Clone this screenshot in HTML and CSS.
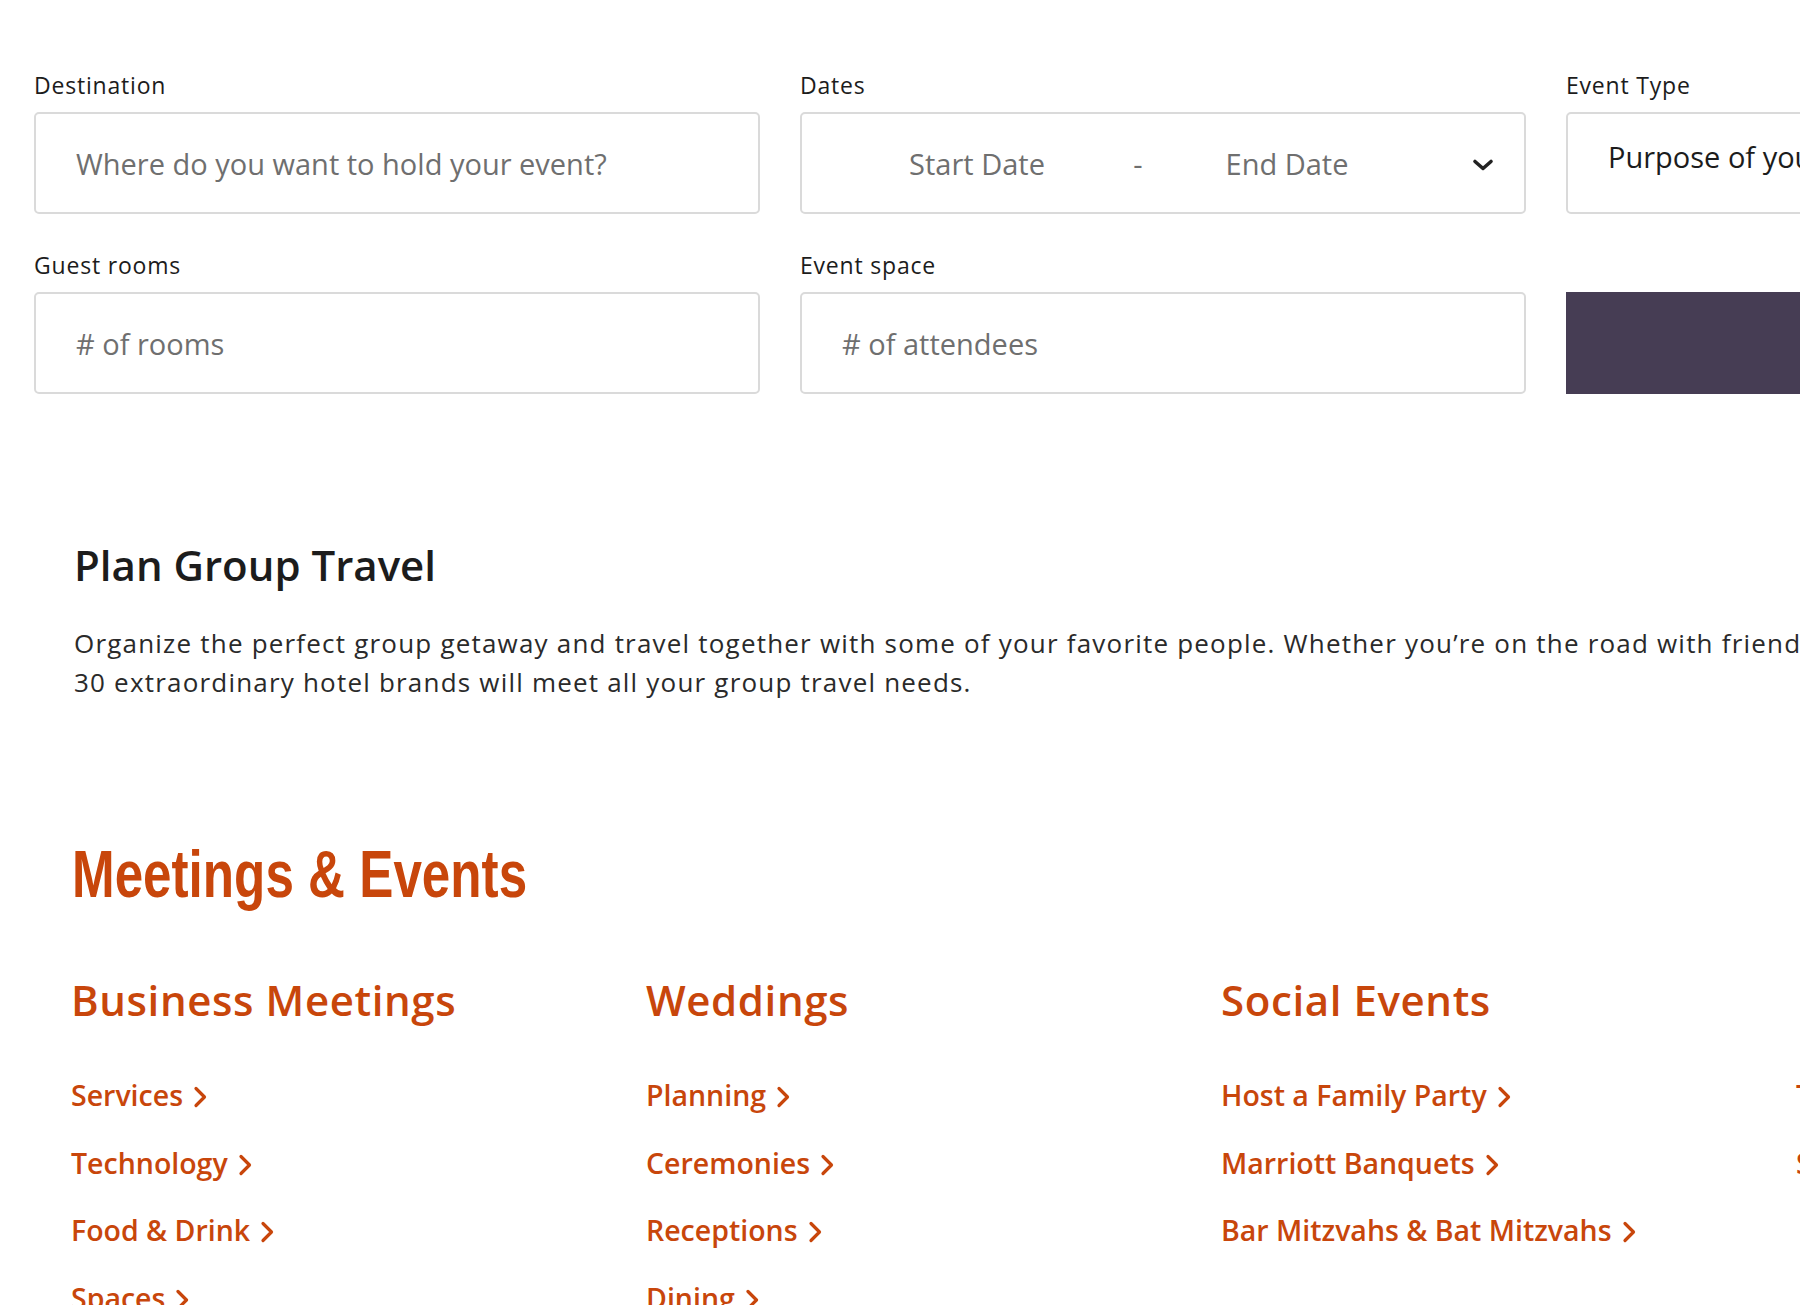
FILE: index.html
```html
<!DOCTYPE html>
<html lang="en">
<head>
<meta charset="utf-8">
<title>Meetings &amp; Events</title>
<link rel="stylesheet" href="styles.css">
</head>
<body>
<div class="page">
  <section class="search">
    <div class="field">
      <label class="lbl">Destination</label>
      <div class="box"><span class="ph">Where do you want to hold your event?</span></div>
    </div>
    <div class="field">
      <label class="lbl">Dates</label>
      <div class="box dates">
        <span class="ph c">Start Date</span>
        <span class="ph c">-</span>
        <span class="ph c">End Date</span>
        <span></span>
        <svg class="caret" width="22" height="14" viewBox="0 0 22 14"><path d="M3 3.5 L11 10.5 L19 3.5" fill="none" stroke="#222" stroke-width="3.6" stroke-linecap="round" stroke-linejoin="round"/></svg>
      </div>
    </div>
    <div class="field">
      <label class="lbl">Event Type</label>
      <div class="box type"><span class="val">Purpose of your event</span></div>
    </div>
    <div class="field">
      <label class="lbl">Guest rooms</label>
      <div class="box"><span class="ph"># of rooms</span></div>
    </div>
    <div class="field">
      <label class="lbl">Event space</label>
      <div class="box"><span class="ph"># of attendees</span></div>
    </div>
    <div class="field">
      <span class="lbl">&nbsp;</span>
      <button class="go" type="button">Find</button>
    </div>
  </section>

  <section class="group">
    <h2 class="group-title">Plan Group Travel</h2>
    <p class="group-text">Organize the perfect group getaway and travel together with some of your favorite people. Whether you’re on the road with friends, family or teammates, our<br>30 extraordinary hotel brands will meet all your group travel needs.</p>
  </section>

  <section class="events">
    <h1 class="events-title">Meetings &amp; Events</h1>
    <div class="cols">
      <div class="col">
        <h3 class="col-title">Business Meetings</h3>
        <a class="lnk" href="#">Services<svg class="chev" width="15" height="22" viewBox="0 0 15 22"><path d="M3 2.5 L11.5 11 L3 19.5" fill="none" stroke="currentColor" stroke-width="3.2" stroke-linecap="round" stroke-linejoin="round"/></svg></a>
        <a class="lnk" href="#">Technology<svg class="chev" width="15" height="22" viewBox="0 0 15 22"><path d="M3 2.5 L11.5 11 L3 19.5" fill="none" stroke="currentColor" stroke-width="3.2" stroke-linecap="round" stroke-linejoin="round"/></svg></a>
        <a class="lnk" href="#">Food &amp; Drink<svg class="chev" width="15" height="22" viewBox="0 0 15 22"><path d="M3 2.5 L11.5 11 L3 19.5" fill="none" stroke="currentColor" stroke-width="3.2" stroke-linecap="round" stroke-linejoin="round"/></svg></a>
        <a class="lnk" href="#">Spaces<svg class="chev" width="15" height="22" viewBox="0 0 15 22"><path d="M3 2.5 L11.5 11 L3 19.5" fill="none" stroke="currentColor" stroke-width="3.2" stroke-linecap="round" stroke-linejoin="round"/></svg></a>
      </div>
      <div class="col">
        <h3 class="col-title">Weddings</h3>
        <a class="lnk" href="#">Planning<svg class="chev" width="15" height="22" viewBox="0 0 15 22"><path d="M3 2.5 L11.5 11 L3 19.5" fill="none" stroke="currentColor" stroke-width="3.2" stroke-linecap="round" stroke-linejoin="round"/></svg></a>
        <a class="lnk" href="#">Ceremonies<svg class="chev" width="15" height="22" viewBox="0 0 15 22"><path d="M3 2.5 L11.5 11 L3 19.5" fill="none" stroke="currentColor" stroke-width="3.2" stroke-linecap="round" stroke-linejoin="round"/></svg></a>
        <a class="lnk" href="#">Receptions<svg class="chev" width="15" height="22" viewBox="0 0 15 22"><path d="M3 2.5 L11.5 11 L3 19.5" fill="none" stroke="currentColor" stroke-width="3.2" stroke-linecap="round" stroke-linejoin="round"/></svg></a>
        <a class="lnk" href="#">Dining<svg class="chev" width="15" height="22" viewBox="0 0 15 22"><path d="M3 2.5 L11.5 11 L3 19.5" fill="none" stroke="currentColor" stroke-width="3.2" stroke-linecap="round" stroke-linejoin="round"/></svg></a>
      </div>
      <div class="col">
        <h3 class="col-title">Social Events</h3>
        <a class="lnk" href="#">Host a Family Party<svg class="chev" width="15" height="22" viewBox="0 0 15 22"><path d="M3 2.5 L11.5 11 L3 19.5" fill="none" stroke="currentColor" stroke-width="3.2" stroke-linecap="round" stroke-linejoin="round"/></svg></a>
        <a class="lnk" href="#">Marriott Banquets<svg class="chev" width="15" height="22" viewBox="0 0 15 22"><path d="M3 2.5 L11.5 11 L3 19.5" fill="none" stroke="currentColor" stroke-width="3.2" stroke-linecap="round" stroke-linejoin="round"/></svg></a>
        <a class="lnk" href="#">Bar Mitzvahs &amp; Bat Mitzvahs<svg class="chev" width="15" height="22" viewBox="0 0 15 22"><path d="M3 2.5 L11.5 11 L3 19.5" fill="none" stroke="currentColor" stroke-width="3.2" stroke-linecap="round" stroke-linejoin="round"/></svg></a>
      </div>
      <div class="col">
        <h3 class="col-title">&nbsp;</h3>
        <a class="lnk" href="#">Travel Agents</a>
        <a class="lnk" href="#">Small Groups</a>
      </div>
    </div>
  </section>
</div>
</body>
</html>
```

FILE: styles.css
```css
* { box-sizing: border-box; }
html, body { margin: 0; padding: 0; }
body {
  background: #fff;
  color: #1c1c1c;
  font-family: "Open Sans", "Noto Sans", "Liberation Sans", sans-serif;
  overflow: hidden;
  width: 1800px;
  height: 1305px;
}
.page { width: 2400px; }

/* search form */
.search {
  display: grid;
  grid-template-columns: 726px 726px 726px;
  column-gap: 40px;
  row-gap: 39px;
  padding: 73px 0 0 34px;
}
.field { display: flex; flex-direction: column; }
.lbl {
  font-size: 23px;
  line-height: 24px;
  color: #1c1c1c;
  margin-bottom: 15px;
  letter-spacing: 0.8px;
}
.box {
  height: 102px;
  border: 2px solid #dadada;
  border-radius: 5px;
  display: flex;
  align-items: center;
  padding: 0 40px;
  background: #fff;
}
.ph {
  font-size: 29px;
  color: #6f6f6f;
}
.val {
  font-size: 29px;
  color: #1c1c1c;
  padding-bottom: 14px;
}
.box.dates {
  display: grid;
  grid-template-columns: 310px 12px 286px 1fr 22px;
  align-items: center;
  padding: 0 30px 0 20px;
}
.ph.c { text-align: center; }
.caret { display: block; margin-top: 4px; }
.go {
  height: 102px;
  border: 0;
  border-radius: 0;
  background: #463d54;
  color: #fff;
  font-family: inherit;
  font-size: 24px;
  font-weight: 600;
}

/* plan group travel */
.group { padding: 145px 0 0 74px; }
.group-title {
  margin: 0;
  font-size: 42px;
  font-weight: 600;
  line-height: 52px;
  color: #1c1c1c;
}
.group-text {
  margin: 33px 0 0;
  font-size: 26px;
  line-height: 39px;
  letter-spacing: 1.2px;
  color: #2a2a2a;
  white-space: nowrap;
}

/* meetings and events */
.events { padding: 134px 0 0 72px; }
.events-title {
  display: inline-block;
  margin: 0;
  font-family: "Liberation Sans", Arial, sans-serif;
  font-weight: 700;
  font-size: 67px;
  line-height: 76px;
  color: #c8460b;
  letter-spacing: 0;
  transform: scaleX(0.764);
  transform-origin: left center;
}
.cols {
  display: grid;
  grid-template-columns: repeat(4, 575px);
  margin-top: 64px;
  margin-left: -1px;
}
.col { display: flex; flex-direction: column; align-items: flex-start; }
.col-title {
  margin: 0 0 51px;
  font-size: 42px;
  line-height: 48px;
  font-weight: 600;
  letter-spacing: 0.6px;
  color: #c8460b;
}
.lnk {
  display: inline-flex;
  align-items: center;
  gap: 10px;
  font-size: 28.5px;
  line-height: 40px;
  font-weight: 600;
  color: #c8460b;
  text-decoration: none;
  margin-bottom: 27.5px;
}
.chev { display: block; margin-top: 4px; }
```
